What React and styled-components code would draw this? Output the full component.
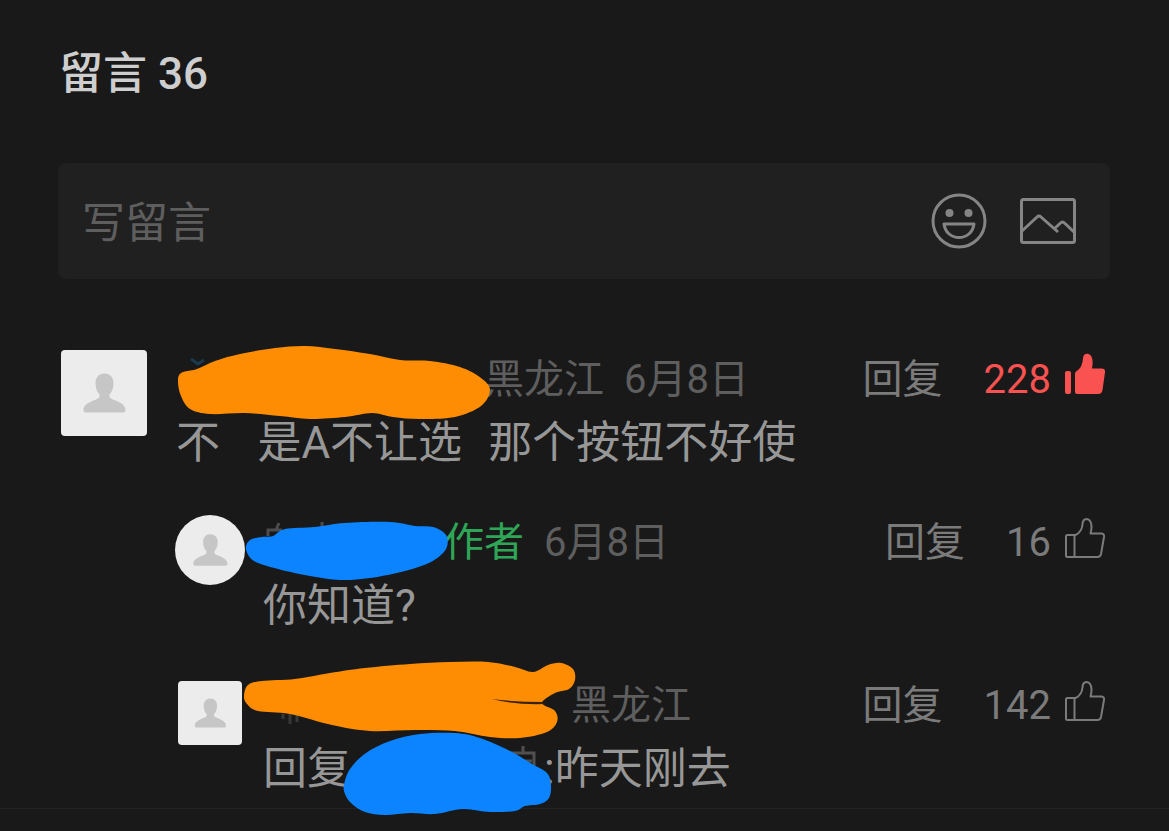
import React from "react";
import styled, { createGlobalStyle } from "styled-components";

const GlobalStyle = createGlobalStyle`
  *, *::before, *::after { box-sizing: border-box; }
  body {
    margin: 0;
    background: #191919;
    font-family: Roboto, "Noto Sans CJK SC", sans-serif;
  }
  button, input { font: inherit; }
`;

const Page = styled.main`
  min-height: 100vh;
  background: #191919;
`;

const Panel = styled.section`
  padding: 42px 59px 7px 58px;
  border-bottom: 1px solid #242424;
`;

const Title = styled.h1`
  margin: 0 0 57px;
  padding-left: 1px;
  font-size: 44px;
  line-height: 64px;
  font-weight: 500;
  color: #cecece;
`;

const Composer = styled.form`
  display: flex;
  align-items: center;
  gap: 33px;
  height: 116px;
  margin-bottom: 70px;
  padding: 0 34px 0 24px;
  border-radius: 8px;
  background: #202020;
`;

const ComposerInput = styled.input`
  flex: 1;
  min-width: 0;
  padding: 4px 0 0;
  border: 0;
  outline: 0;
  background: transparent;
  color: #999;
  font-size: 43px;
  line-height: 64px;
  &::placeholder { color: #5e5e5e; opacity: 1; }
`;

const IconButton = styled.button`
  display: flex;
  padding: 0;
  border: 0;
  background: none;
  color: #858585;
  cursor: pointer;
`;

const List = styled.ul`
  display: flex;
  flex-direction: column;
  gap: 37px;
  margin: 0;
  padding: 0;
  list-style: none;
`;

const Item = styled.li`
  display: flex;
  gap: ${(p) => (p.$nested ? 18 : 29)}px;
  padding-left: ${(p) => (p.$nested ? 117 : 3)}px;
`;

const AvatarSlot = styled.div`
  display: flex;
  flex: none;
  align-items: center;
  justify-content: center;
  width: ${(p) => p.$size}px;
  height: ${(p) => p.$size}px;
  margin-top: ${(p) => p.$top}px;
`;

const AvatarFrame = styled.svg`
  display: block;
  width: ${(p) => p.$size}px;
  height: ${(p) => p.$size}px;
  border-radius: ${(p) => (p.$round ? "50%" : "4px")};
  background: #ececec;
`;

const Body = styled.div`
  flex: 1;
  min-width: 0;
`;

const Meta = styled.div`
  display: flex;
  align-items: center;
  height: 62px;
  padding-right: 5px;
  font-size: 40px;
  line-height: 62px;
  white-space: nowrap;
`;

const Info = styled.span`
  margin-right: 20px;
  color: ${(p) => (p.$author ? "#2fa657" : "#5e5e5e")};
`;

const Actions = styled.div`
  display: flex;
  align-items: center;
  gap: 41px;
  margin-left: auto;
`;

const ActionButton = styled.button`
  display: flex;
  align-items: center;
  gap: 14px;
  padding: 0;
  border: 0;
  background: none;
  color: ${(p) => (p.$liked ? "#fa5151" : "#7b7b7b")};
  cursor: pointer;
`;

const Message = styled.p`
  display: flex;
  margin: 0;
  font-size: 44px;
  line-height: 64px;
  height: 64px;
  color: #979797;
  white-space: pre;
`;

const MaskedName = styled.span`
  position: relative;
  flex: none;
  width: ${(p) => p.$width}px;
  height: 62px;
`;

const Scribble = styled.svg`
  position: absolute;
  z-index: 1;
  top: 0;
  left: 0;
  overflow: visible;
  pointer-events: none;
`;

/* Closed smooth outline through a list of points. */
function smooth(points) {
  const n = points.length;
  const at = (i) => points[(i + n) % n];
  let d = `M${at(0).join(" ")}`;
  for (let i = 0; i < n; i += 1) {
    const [a, b, c, e] = [at(i - 1), at(i), at(i + 1), at(i + 2)];
    d += `C${b[0] + (c[0] - a[0]) / 6} ${b[1] + (c[1] - a[1]) / 6} `;
    d += `${c[0] - (e[0] - b[0]) / 6} ${c[1] - (e[1] - b[1]) / 6} ${c[0]} ${c[1]}`;
  }
  return `${d}Z`;
}

const ORANGE = "#ff8d03";
const BLUE = "#0c84ff";

const MASKS = {
  reader: {
    width: 308, origin: [176, 349], fill: ORANGE,
    under: "M191 359L198 364L204 360", underColor: "#1b3a50",
    points: [[178, 382], [181, 373], [197, 369], [215, 361], [240, 354], [275, 348], [305, 346], [335, 349], [370, 354], [400, 360], [430, 361], [460, 367], [481, 378], [490, 390], [481, 406], [455, 417], [420, 419], [393, 417], [372, 413], [345, 417], [310, 419], [280, 416], [245, 413], [210, 414], [190, 409], [181, 396]],
  },
  author: {
    width: 181, origin: [263, 512], fill: BLUE,
    under: "M268 536V530H282M279 523L276 530M322 522V526", underColor: "#4c4c4c",
    points: [[246, 549], [250, 540], [262, 537], [273, 536], [285, 529], [315, 527], [345, 523], [390, 522], [415, 526], [433, 527], [446, 535], [446, 549], [431, 562], [405, 571], [370, 578], [340, 580], [310, 576], [278, 569], [254, 561]],
  },
  replier: {
    width: 308, origin: [263, 675], fill: ORANGE,
    under: "M283 714V719M290 714V724M297 714V722", underColor: "#353a36",
    notch: "M492 699Q515 702 542 702L545 704Q515 705 492 699Z",
    points: [[244, 696], [248, 685], [262, 681], [295, 679], [330, 673], [365, 668], [410, 664], [450, 662], [488, 662], [515, 667], [533, 672], [548, 665], [561, 663], [573, 669], [575, 680], [569, 689], [555, 693], [542, 703], [555, 711], [557, 722], [547, 732], [520, 738], [490, 737], [455, 731], [415, 730], [370, 731], [332, 725], [290, 714], [258, 711], [247, 704]],
  },
  target: {
    width: 193, origin: [351, 737], fill: BLUE,
    under: "M511 760V753H534V766M523 746V753M519 761H532", underColor: "#505050",
    points: [[344, 785], [350, 769], [366, 753], [390, 741], [420, 734], [455, 733], [480, 738], [510, 751], [532, 764], [547, 773], [551, 785], [549, 798], [540, 804], [525, 806], [515, 811], [490, 812], [463, 809], [435, 814], [410, 813], [385, 815], [365, 812], [351, 803], [345, 794]],
  },
};

function Masked({ name }) {
  const m = MASKS[name];
  return (
    <MaskedName $width={m.width}>
      <Scribble width={m.width} height="62" viewBox={`${m.origin[0]} ${m.origin[1]} ${m.width} 62`} aria-hidden="true">
        <path d={m.under} fill="none" stroke={m.underColor} strokeWidth="3" />
        <path d={smooth(m.points)} fill={m.fill} />
        {m.notch && <path d={m.notch} fill="#3a2206" />}
      </Scribble>
    </MaskedName>
  );
}

function Avatar({ slot, size, top, round }) {
  return (
    <AvatarSlot $size={slot} $top={top}>
      <AvatarFrame $size={size} $round={round} viewBox="0 0 86 86" role="img" aria-label="头像">
        <path
          fill="#c6c6c6"
          d="M43.500 23.500C49 23.500 52.500 27.500 52.500 33C52.500 38 51 42 48.500 44.500V47C49 50 64.500 51.500 64.500 60Q64.500 62.500 62 62.500H25Q22.500 62.500 22.500 60C22.500 51.500 38 50 38.500 47V44.500C36 42 34.500 38 34.500 33C34.500 27.500 38 23.500 43.500 23.500Z"
        />
      </AvatarFrame>
    </AvatarSlot>
  );
}

function SmileIcon() {
  return (
    <svg width="56" height="56" viewBox="0 0 56 56" fill="none" stroke="currentColor" strokeWidth="3" aria-hidden="true">
      <circle cx="28" cy="28" r="26" />
      <circle cx="18.500" cy="20" r="4" fill="currentColor" stroke="none" />
      <circle cx="37.500" cy="20" r="4" fill="currentColor" stroke="none" />
      <path d="M13 31H43C42 39 36 44.500 28 44.500S14 39 13 31Z" strokeLinejoin="round" />
    </svg>
  );
}

function PictureIcon() {
  return (
    <svg width="56" height="46" viewBox="0 0 56 46" fill="none" stroke="currentColor" strokeWidth="3" strokeLinejoin="round" aria-hidden="true">
      <rect x="1.500" y="1.500" width="53" height="43" rx="2" />
      <path d="M2 33L17 19Q19 17 21 19L38 34M34 31L40.500 25Q42.500 23 44.500 25L54 34" />
    </svg>
  );
}

function ThumbIcon({ filled }) {
  return filled ? (
    <svg width="40" height="56" viewBox="0 -4 40 56" fill="currentColor" aria-hidden="true">
      <rect x="0" y="15" width="6" height="23" rx="2" />
      <path d="M10 17.500Q10 16 11.500 15.200C16 12.500 17.500 8 18 2C18.300 -1 20 -2.500 22.500 -2.200C27.500 -1.500 28.500 5 27 12.500H36.500Q40.500 12.500 40 16.500L37.500 34Q37 38 33 38H12Q10 38 10 36Z" />
    </svg>
  ) : (
    <svg width="40" height="56" viewBox="0 -4 40 56" fill="none" stroke="currentColor" strokeWidth="2" strokeLinejoin="round" aria-hidden="true">
      <path d="M1 17.500Q1 16 2.500 16H10.500C15 14 17 11 17.500 5.500C17.700 1.500 19 0 21.500 0C26.500 .5 27.500 7 25.500 14.500H36Q39.500 14.500 39 18L36 35Q35.400 38 32.500 38H2.500Q1 38 1 36.500ZM9.500 16V38" />
    </svg>
  );
}

function CommentActions({ count, liked }) {
  return (
    <Actions>
      <ActionButton type="button">回复</ActionButton>
      <ActionButton type="button" $liked={liked} aria-label={`赞 ${count}`}>
        <span>{count}</span>
        <ThumbIcon filled={liked} />
      </ActionButton>
    </Actions>
  );
}

export default function App() {
  return (
    <Page>
      <GlobalStyle />
      <Panel>
        <Title>留言 36</Title>
        <Composer onSubmit={(e) => e.preventDefault()}>
          <ComposerInput type="text" placeholder="写留言" aria-label="写留言" />
          <IconButton type="button" aria-label="表情"><SmileIcon /></IconButton>
          <IconButton type="button" aria-label="图片"><PictureIcon /></IconButton>
        </Composer>
        <List>
          <Item>
            <Avatar slot={86} size={86} top={1} />
            <Body>
              <Meta>
                <Masked name="reader" />
                <Info>黑龙江</Info>
                <Info>6月8日</Info>
                <CommentActions count={228} liked />
              </Meta>
              <Message>{"不\u2002\u2004是A不让选\u2004\u2005那个按钮不好使"}</Message>
            </Body>
          </Item>
          <Item $nested>
            <Avatar slot={70} size={70} top={3} round />
            <Body>
              <Meta>
                <Masked name="author" />
                <Info $author>作者</Info>
                <Info>6月8日</Info>
                <CommentActions count={16} />
              </Meta>
              <Message>你知道?</Message>
            </Body>
          </Item>
          <Item $nested>
            <Avatar slot={70} size={64} top={3} />
            <Body>
              <Meta>
                <Masked name="replier" />
                <Info>黑龙江</Info>
                <CommentActions count={142} />
              </Meta>
              <Message>
                <span>回复</span>
                <Masked name="target" />
                <span>:昨天刚去</span>
              </Message>
            </Body>
          </Item>
        </List>
      </Panel>
    </Page>
  );
}
